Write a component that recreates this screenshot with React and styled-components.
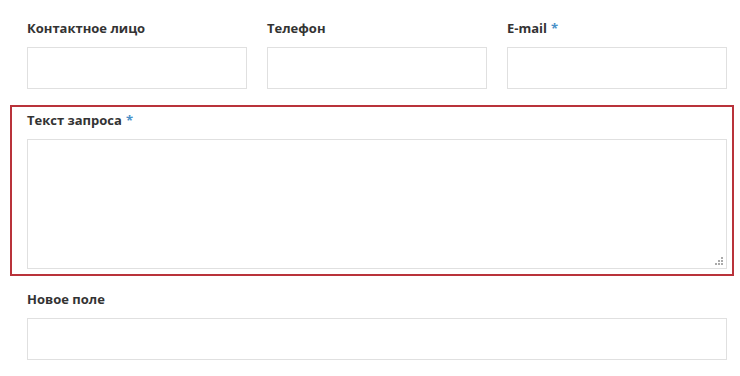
import React from "react";
import styled, { createGlobalStyle } from "styled-components";

const Global = createGlobalStyle`
  body {
    margin: 0;
    background: #fff;
    font-family: "Open Sans", "Liberation Sans", sans-serif;
  }
`;

const Form = styled.form`
  width: 700px;
  padding: 18px 14px 0 27px;
  display: flex;
  flex-direction: column;
`;

const Row = styled.div`
  display: grid;
  grid-template-columns: repeat(3, 220px);
  column-gap: 20px;
`;

const Field = styled.div`
  display: flex;
  flex-direction: column;
  margin-top: ${(p) => p.$gap || 0}px;
`;

const ErrorField = styled(Field)`
  margin-left: -17px;
  margin-right: -7px;
  padding: 3px 5px 5px 15px;
  border: 2px solid #b9323a;
`;

const Label = styled.label`
  font-size: 13px;
  font-weight: 700;
  line-height: 20px;
  color: #333;
  margin-bottom: 9px;
`;

const Req = styled.span`
  color: #4a90c8;
  margin-left: 4px;
`;

const Input = styled.input`
  box-sizing: border-box;
  height: 42px;
  width: 100%;
  border: 1px solid #e0e0e0;
  background: #fff;
  outline: none;
  padding: 0 10px;
  font: inherit;
`;

const AreaWrap = styled.div`
  position: relative;
  height: 130px;
`;

const Area = styled.textarea`
  box-sizing: border-box;
  display: block;
  width: 100%;
  height: 100%;
  border: 1px solid #e0e0e0;
  resize: none;
  outline: none;
  font: inherit;
`;

const Grip = styled.svg`
  position: absolute;
  right: 4px;
  bottom: 4px;
`;

function ResizeGrip() {
  const dots = [
    [6, 0],
    [3, 3],
    [6, 3],
    [0, 6],
    [3, 6],
    [6, 6],
  ];
  return (
    <Grip width="8" height="8" viewBox="0 0 8 8">
      {dots.map(([x, y]) => (
        <rect key={`${x}-${y}`} x={x} y={y} width="2" height="2" fill="#aaa" />
      ))}
    </Grip>
  );
}

export default function App() {
  return (
    <>
      <Global />
      <Form onSubmit={(e) => e.preventDefault()}>
        <Row>
          <Field>
            <Label>Контактное лицо</Label>
            <Input />
          </Field>
          <Field>
            <Label>Телефон</Label>
            <Input />
          </Field>
          <Field>
            <Label>
              E-mail<Req>*</Req>
            </Label>
            <Input />
          </Field>
        </Row>
        <ErrorField $gap={16}>
          <Label>
            Текст запроса<Req>*</Req>
          </Label>
          <AreaWrap>
            <Area />
            <ResizeGrip />
          </AreaWrap>
        </ErrorField>
        <Field $gap={13}>
          <Label>Новое поле</Label>
          <Input />
        </Field>
      </Form>
    </>
  );
}
